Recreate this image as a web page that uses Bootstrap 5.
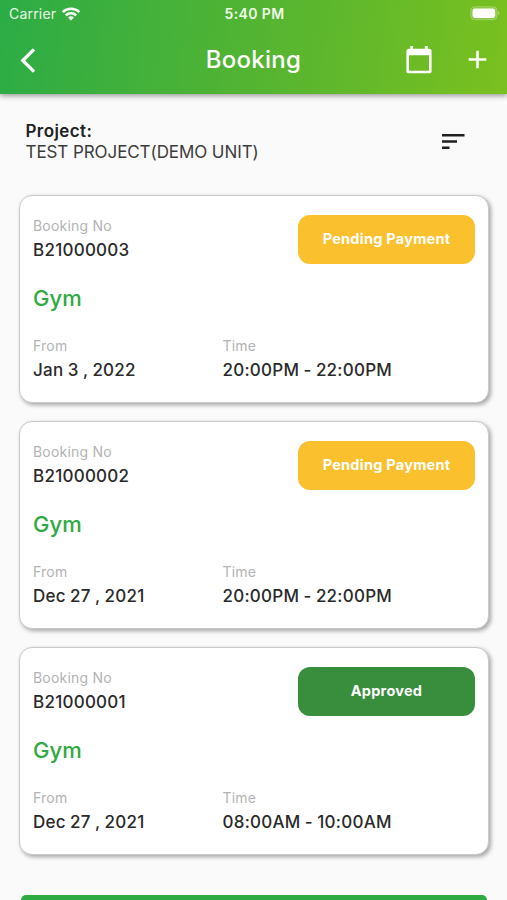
<!DOCTYPE html>
<html lang="en">
<head>
<meta charset="utf-8">
<meta name="viewport" content="width=device-width, initial-scale=1">
<title>Booking</title>
<link href="https://cdn.jsdelivr.net/npm/bootstrap@5.3.0/dist/css/bootstrap.min.css" rel="stylesheet">
<style>
  body { font-family: Inter, "Liberation Sans", sans-serif; background: #fafafa; color: #212121; height: 900px; overflow: hidden; }
  .app-header { height: 94px; background: linear-gradient(97deg, #2cac46 0%, #53b432 50%, #7ac01f 100%); box-shadow: 0 2px 5px rgba(0,0,0,.38); color: #fff; }
  .status-bar { height: 27px; padding: 0 7px 0 9px; font-size: 14px; line-height: 27px; }
  .status-bar > *, .title-bar > * { flex: 1 1 0; }
  .carrier { letter-spacing: .2px; color: #e9f8e6; }
  .clock { font-size: 14px; font-weight: 600; letter-spacing: .4px; color: #effbe9; }
  .title-bar { height: 65px; padding: 0 20px; }
  .page-title { font-size: 24px; font-weight: 500; letter-spacing: .25px; line-height: 30px; padding-top: 1px; }
  .calendar-icon { margin-right: -12px; }
  .project { padding: 27px 42px 0 25.5px; height: 101px; font-size: 17px; line-height: 21px; }
  .project-label { font-weight: 600; letter-spacing: .4px; }
  .project-name { letter-spacing: -.08px; color: #3c3c3c; }
  .sort-btn { margin-top: 13px; }
  .bookings { padding: 0 18px 0 19px; gap: 18px; }
  .booking { --bs-card-border-radius: 13px; height: 208px; padding: 20px 13px 0; border: 1.5px solid #c9c9c9; box-shadow: 2px 2px 4px rgba(0,0,0,.34); color: #2a2a2a; }
  .field-label { font-size: 14px; line-height: 20px; color: #b3b3b3; letter-spacing: .2px; }
  .field-value { font-size: 17px; line-height: 28px; font-weight: 500; letter-spacing: .25px; word-spacing: -.5px; }
  .facility { font-size: 22px; line-height: 30px; font-weight: 500; margin: 19px 0 23px; color: #2eaa42; letter-spacing: .1px; }
  .state { width: 177px; height: 49px; margin-top: -1.5px; border-radius: 12px; font-size: 14.5px; font-weight: 700; letter-spacing: .25px; color: #fff; }
  .state-pending { background: #fbc02d; }
  .state-approved { background: #388e3c; }
  .from-col { width: 189.5px; }
  .bottom-action { margin: 40px 20px 0 21px; height: 50px; border-radius: 5px; background: #2eaa42; }
</style>
<script src="https://cdn.jsdelivr.net/npm/bootstrap@5.3.0/dist/js/bootstrap.bundle.min.js"></script>
</head>
<body>
<header class="app-header">
  <div class="status-bar d-flex align-items-center">
    <div class="d-flex align-items-center"><span class="carrier">Carrier</span>
      <svg class="ms-1" width="22" height="16" viewBox="0 0 22 16" fill="none" stroke="#fff" stroke-width="2.5"><path d="M2.7 6.2a11.8 11.8 0 0 1 16.6 0M5.8 9.4a7.4 7.4 0 0 1 10.4 0"/><path d="M8.1 11.6a4.1 4.1 0 0 1 5.8 0L11 14.5z" fill="#fff" stroke="none"/></svg>
    </div>
    <div class="clock text-center text-nowrap">5:40 PM</div>
    <div class="d-flex justify-content-end">
      <svg width="30" height="16" viewBox="0 0 30 16"><rect x=".7" y=".7" width="26.3" height="13" rx="4" fill="#fff" fill-opacity=".15" stroke="#fff" stroke-opacity=".25"/><rect x="2.5" y="2.5" width="22.7" height="9.4" rx="2.4" fill="#fff"/><path d="M28.2 5.1c1.6.6 1.6 3.6 0 4.2z" fill="#fff" fill-opacity=".4"/></svg>
    </div>
  </div>
  <div class="title-bar d-flex align-items-center">
    <a href="#" aria-label="Back"><svg width="16" height="25" viewBox="0 0 16 25" fill="none" stroke="#fff" stroke-width="3.3"><path d="M14 1.3 2.8 12.5 14 23.7"/></svg></a>
    <h1 class="page-title text-center mb-0">Booking</h1>
    <div class="d-flex justify-content-end align-items-center gap-5">
      <svg class="calendar-icon" width="26" height="28" viewBox="0 0 26 28"><path fill="#fff" fill-rule="evenodd" d="M4.3 0h2.8v2.7h11.8V0h2.8v2.7H23a2.6 2.6 0 0 1 2.6 2.6v19.4A2.6 2.6 0 0 1 23 27.3H3A2.6 2.6 0 0 1 .4 24.7V5.3A2.6 2.6 0 0 1 3 2.7h1.3zM3 9.2v15.5h20V9.2z"/></svg>
      <svg width="19" height="19" viewBox="0 0 19 19" fill="none" stroke="#fff" stroke-width="2.6"><path d="M9.5 .7v17.6M.7 9.5h17.6"/></svg>
    </div>
  </div>
</header>
<main>
  <section class="project d-flex justify-content-between">
    <div><div class="project-label">Project:</div><div class="project-name">TEST PROJECT(DEMO UNIT)</div></div>
    <svg class="sort-btn" width="23" height="16" viewBox="0 0 23 16" fill="#202020"><path d="M0 0h22.5v2.6H0zM0 6.2h15v2.6H0zM0 12.4h7.5V15H0z"/></svg>
  </section>
  <section class="bookings d-flex flex-column">
    <article class="card booking">
      <div class="d-flex justify-content-between">
        <div><div class="field-label">Booking No</div><div class="field-value">B21000003</div></div>
        <div class="state state-pending d-flex align-items-center justify-content-center">Pending Payment</div>
      </div>
      <div class="facility">Gym</div>
      <div class="d-flex">
        <div class="from-col"><div class="field-label">From</div><div class="field-value">Jan 3 , 2022</div></div>
        <div><div class="field-label">Time</div><div class="field-value">20:00PM - 22:00PM</div></div>
      </div>
    </article>
    <article class="card booking">
      <div class="d-flex justify-content-between">
        <div><div class="field-label">Booking No</div><div class="field-value">B21000002</div></div>
        <div class="state state-pending d-flex align-items-center justify-content-center">Pending Payment</div>
      </div>
      <div class="facility">Gym</div>
      <div class="d-flex">
        <div class="from-col"><div class="field-label">From</div><div class="field-value">Dec 27 , 2021</div></div>
        <div><div class="field-label">Time</div><div class="field-value">20:00PM - 22:00PM</div></div>
      </div>
    </article>
    <article class="card booking">
      <div class="d-flex justify-content-between">
        <div><div class="field-label">Booking No</div><div class="field-value">B21000001</div></div>
        <div class="state state-approved d-flex align-items-center justify-content-center">Approved</div>
      </div>
      <div class="facility">Gym</div>
      <div class="d-flex">
        <div class="from-col"><div class="field-label">From</div><div class="field-value">Dec 27 , 2021</div></div>
        <div><div class="field-label">Time</div><div class="field-value">08:00AM - 10:00AM</div></div>
      </div>
    </article>
  </section>
  <div class="bottom-action"></div>
</main>
</body>
</html>
